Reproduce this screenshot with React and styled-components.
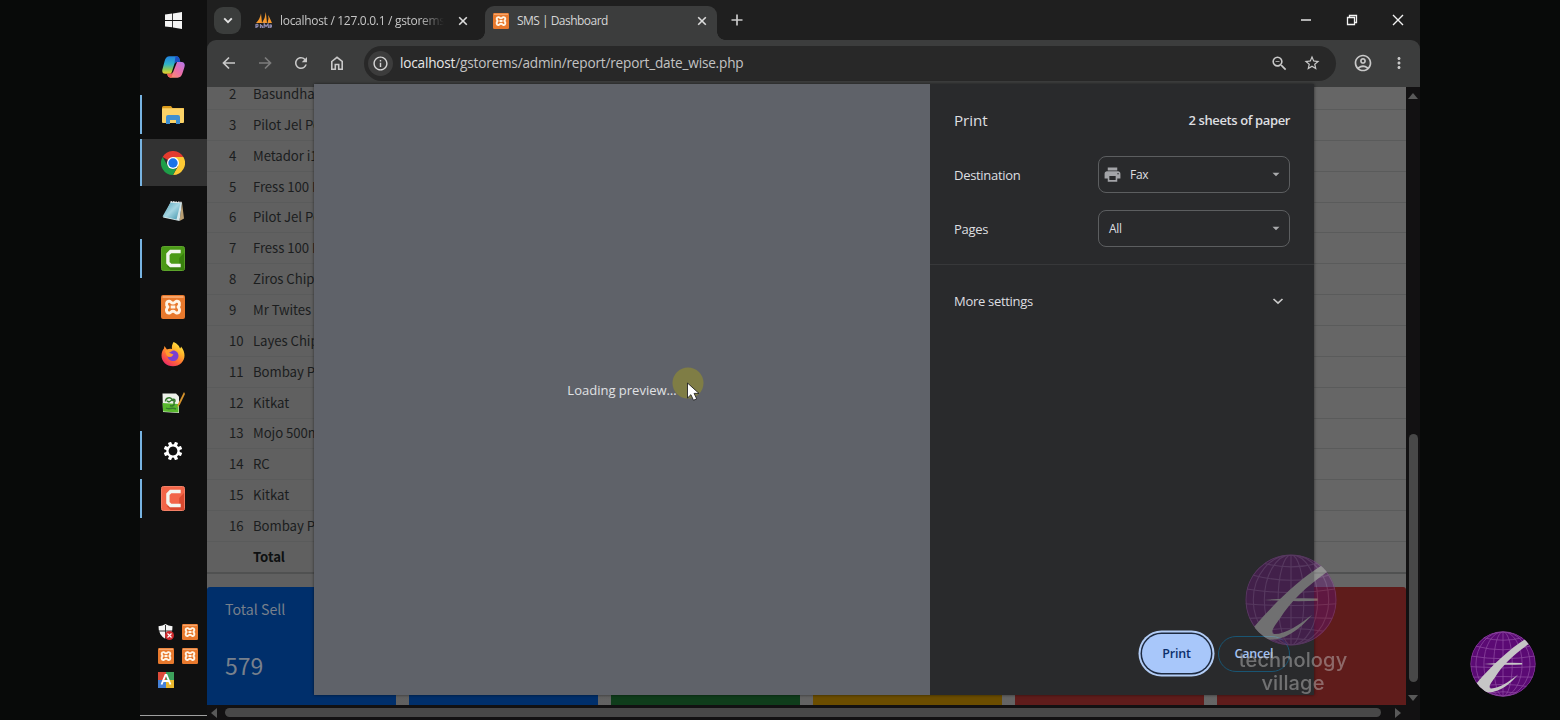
import React from 'react';
import styled, { createGlobalStyle } from 'styled-components';
import { MdRefresh, MdInfoOutline, MdStarOutline, MdOutlineZoomOut, MdOutlineAccountCircle, MdMoreVert, MdPrint } from 'react-icons/md';

const Global = createGlobalStyle`
  * { box-sizing: border-box; }
  body { margin: 0; background: #080a09; overflow: hidden; font-family: "Open Sans", "Noto Sans", sans-serif; }
  svg { display: block; flex: none; }
`;

const Screen = styled.div`
  display: flex; width: 1560px; height: 720px; position: relative; overflow: hidden;
`;
const Gutter = styled.div`width: 140px; background: #080a09;`;

/* ---------- taskbar ---------- */
const Taskbar = styled.nav`
  width: 67px; height: 720px; background: #101010; display: flex; flex-direction: column;
`;
const Slot = styled.div`
  height: ${p => p.$h || 48}px; display: flex; align-items: center; justify-content: center;
  padding-bottom: ${p => (p.$h ? 3 : 1)}px; padding-right: 1px;
  background: ${p => (p.$active ? 'linear-gradient(#323232 0 47px, #101010 47px)' : 'none')};
  &::before {
    content: ""; width: 2px; height: ${p => (p.$active ? 47 : 39)}px; margin-right: auto;
    background: ${p => (p.$on ? '#78b4e2' : 'transparent')};
  }
  & > svg { margin-right: auto; margin-left: -2px; }
`;
const Tray = styled.div`
  margin-top: auto; margin-left: 18px; display: grid; grid-template-columns: 16px 16px; gap: 8px;
`;
const ShowDesktop = styled.div`height: 5px; margin-top: 27px; border-top: 1px solid #a0a0a0;`;

/* ---------- browser ---------- */
const Browser = styled.main`
  width: 1213px; height: 720px; display: flex; flex-direction: column; background: #1f1f1f; position: relative;
`;
const TabStrip = styled.div`
  height: 40px; display: flex; align-items: flex-start; padding: 6px 0 0 7px; background: #1f1f1f; color: #d4d4d4;
`;
const TabSearch = styled.div`
  width: 27px; height: 27px; margin-top: 1px; border-radius: 9px; background: #3b3d3c;
  display: grid; place-items: center;
`;
const Tab = styled.div`
  height: 34px; width: ${p => p.$w}px; display: flex; align-items: center; position: relative;
  padding: 0 ${p => (p.$active ? 10 : 15)}px 5px ${p => (p.$active ? 8 : 13)}px;
  margin-left: ${p => (p.$active ? 2 : 1)}px;
  border-radius: 9px 9px 0 0; background: ${p => (p.$active ? '#3c3d3d' : 'transparent')};
  &::before, &::after {
    content: ""; display: ${p => (p.$active ? 'block' : 'none')};
    position: absolute; bottom: 0; width: 8px; height: 8px;
  }
  &::before { left: -8px; background: radial-gradient(circle at 0 0, transparent 7.5px, #3c3d3d 8px); }
  &::after { right: -8px; background: radial-gradient(circle at 100% 0, transparent 7.5px, #3c3d3d 8px); }
`;
const TabTitle = styled.span`
  flex: 1; margin: 1px ${p => (p.$fade ? 14 : 8)}px 0 8px;
  font-size: 12px; letter-spacing: ${p => p.$ls}px; line-height: 18px;
  white-space: nowrap; overflow: hidden; color: ${p => (p.$fade ? '#c6c6c6' : '#d6d6d6')};
  mask-image: ${p => (p.$fade ? 'linear-gradient(90deg, #000 85%, transparent)' : 'none')};
`;
const NewTab = styled.div`margin: 8px 0 0 14px;`;
const WindowControls = styled.div`
  margin-left: auto; margin-right: 16px; display: flex; align-items: center; height: 27px; gap: 34px;
`;
const Toolbar = styled.div`
  height: 47px; display: flex; align-items: center; background: #3c3d3d; border-radius: 9px 9px 0 0;
  padding: 0 12px 1px 14px; color: #c9c9c9;
`;
const NavButtons = styled.div`display: flex; gap: 20px; width: 143px;`;
const UrlBar = styled.div`
  width: 972px; height: 35px; border-radius: 18px; background: #282828; display: flex; align-items: center;
  padding: 0 15px 0 4px;
`;
const SiteInfo = styled.div`
  width: 25px; height: 25px; border-radius: 50%; background: #3c3c3c; display: grid; place-items: center;
`;
const Url = styled.div`
  margin-left: 7px; font-size: 13.6px; letter-spacing: -0.19px; color: #c3c3c3; flex: 1; padding-bottom: 1px;
  & b { font-weight: 400; color: #e6e6e6; }
`;
const Trailing = styled.div`display: flex; gap: 14px; align-items: center;`;
const Account = styled.div`display: flex; gap: 17px; align-items: center; margin-left: 17px;`;

const Viewport = styled.div`height: 618px; display: flex;`;
const Page = styled.div`
  width: 1199px; height: 618px; overflow: hidden; background: linear-gradient(90deg, #606060 0 107px, #666666 1100px);
  font-family: "Noto Sans CJK SC", "Open Sans", sans-serif; color: #1b1d1e;
`;
const Rows = styled.div`height: 487px; display: flex; flex-direction: column; justify-content: flex-end;`;
const Row = styled.div`
  flex: none; height: ${p => (p.$total ? 32 : 30.87)}px; display: flex; align-items: center;
  border-bottom: ${p => (p.$total ? '2px solid #505151' : '1px solid #5a5b5b')};
  font-size: 13.2px; line-height: 20px; font-weight: ${p => (p.$total ? 700 : 400)};
  padding-left: 22px; color: ${p => (p.$total ? '#0e1011' : 'inherit')};
`;
const Num = styled.span`width: 24px;`;
const Name = styled.span`white-space: nowrap; letter-spacing: -0.05px;`;
const Cards = styled.div`
  margin-top: 13px; height: 118px; display: grid; grid-template-columns: repeat(6, 188.5px); gap: 13.5px;
`;
const Card = styled.div`
  background: ${p => p.$bg}; border-radius: 3px 3px 0 0; color: #78808c; padding: 10px 18px; line-height: 24px;
`;
const CardTitle = styled.div`font-size: 14.2px;`;
const CardValue = styled.div`font-size: 23px; line-height: 32px; margin-top: 28px;`;

const VScroll = styled.div`
  width: 14px; background: #121112; display: flex; flex-direction: column; align-items: center; padding: 5px 0 2px;
`;
const VThumb = styled.div`width: 9px; height: 248px; border-radius: 5px; background: #484848; margin: auto 0 11px;`;
const HScroll = styled.div`
  height: 15px; background: #121112; display: flex; align-items: center; padding: 0 18px 0 3px;
`;
const HThumb = styled.div`flex: none; width: 1156px; height: 9px; border-radius: 5px; background: #484848; margin: 0 12px 0 5px;`;

/* ---------- print dialog ---------- */
const Dialog = styled.section`
  position: absolute; left: 107px; top: 84px; width: 1000px; height: 611px; display: flex;
  box-shadow: 0 0 3px rgba(0,0,0,.55);
`;
const Preview = styled.div`
  width: 616px; background: #5f6269; display: grid; place-items: center; color: #e0e1e4;
  font-size: 13px;
`;
const Settings = styled.div`
  width: 384px; background: #292a2c; color: #dedfe0; display: flex; flex-direction: column;
`;
const Field = styled.div`
  height: ${p => p.$h}px; padding: 0 24px; display: flex; align-items: center; justify-content: space-between;
  font-size: 13px; letter-spacing: -0.3px;
`;
const Heading = styled.span`font-size: 15.2px; letter-spacing: -0.05px;`;
const Sheets = styled.span`font-weight: 600; font-size: 13px; letter-spacing: -0.38px;`;
const Select = styled.div`
  width: 192px; height: 37px; border: 1px solid #5c5e60; border-radius: 8px; display: flex; align-items: center;
  padding: 0 8px 0 ${p => (p.$icon ? 4 : 10)}px; gap: 8px; font-size: 12px; margin-top: -1px;
  & > span { flex: 1; }
`;
const Divider = styled.div`height: 1px; background: #37383a; margin-top: 4px;`;
const Actions = styled.div`
  margin-top: auto; padding: 0 24px 22px; display: flex; justify-content: flex-end; align-items: center; gap: 4px;
`;
const Button = styled.button`
  font: 600 12.5px "Open Sans", sans-serif; letter-spacing: -0.2px; border-radius: 22px; padding: 0 0 1px;
  width: ${p => (p.$primary ? 69 : 72)}px; height: ${p => (p.$primary ? 39 : 36)}px;
  color: ${p => (p.$primary ? '#0c2f6b' : '#a4c2f2')};
  background: ${p => (p.$primary ? '#a8c7fa' : 'transparent')};
  border: ${p => (p.$primary ? '0' : '1px solid #195573')};
  margin: ${p => (p.$primary ? '0 3px' : '0')};
  box-shadow: ${p => (p.$primary ? '0 0 0 1.5px #1d2a40, 0 0 0 3.5px #b3cdf6' : 'none')};
`;

/* ---------- overlays ---------- */
const Watermark = styled.div`
  position: absolute; left: 1223px; top: 554px; width: 140px; display: flex; flex-direction: column; align-items: center;
  font: 500 20px/23px "Inter", sans-serif; letter-spacing: .15px; text-align: center; color: #c8c8c8; opacity: .45;
  & > svg { margin: 0 4px 3px 0; }
`;
const Badge = styled.div`position: absolute; left: 1470px; top: 631px;`;
const Pointer = styled.div`position: absolute; left: 672px; top: 367px;`;

/* ---------- drawings ---------- */
const Xampp = ({ size = 16 }) => (
  <svg width={size} height={size} viewBox="0 0 24 24">
    <rect width="24" height="24" rx="2" fill="#e8792d" />
    <rect x="1.5" y="1" width="21" height="2" fill="#f7a468" />
    <path d="M8.500 6.200C5.400 5.900 4.400 9.400 7 12c-2.800 2.600-1.500 6.500 1.500 6 1.700-.3 1.300-1.800 3.500-1.800s1.800 1.500 3.500 1.800c3 .5 4.300-3.400 1.500-6 2.600-2.600 1.600-6.100-1.500-5.800-1.700.2-1.300 1.900-3.500 1.900S10.200 6.400 8.500 6.200zM9.700 12h4.600" fill="none" stroke="#fff4e4" strokeWidth="2.900" strokeLinejoin="round" />
  </svg>
);
const WindowsLogo = () => (
  <svg width="17" height="17" viewBox="0 0 17 17" fill="#f4f4f4"><path d="M0 2.500 7.200 1.500V8H0zM8 1.400 17 0v8H8zM0 8.900h7.200v6.400L0 14.400zM8 8.900h9V17l-9-1.400z" /></svg>
);
const Copilot = () => (
  <svg width="23" height="22" viewBox="0.700 1.200 22.600 21.300" preserveAspectRatio="none">
    <defs>
      <linearGradient id="cpA" x1="0" y1="0" x2="0" y2="1"><stop offset="0" stopColor="#2283e0" /><stop offset=".45" stopColor="#2fb3c9" /><stop offset=".75" stopColor="#8fca55" /><stop offset="1" stopColor="#f2d02c" /></linearGradient>
      <linearGradient id="cpB" x1="1" y1="0" x2="0" y2="1"><stop offset="0" stopColor="#b277ee" /><stop offset=".5" stopColor="#ee6fa5" /><stop offset="1" stopColor="#ff9b5a" /></linearGradient>
    </defs>
    <path d="M15.500 7H20c3 0 3.500 2.500 2.700 5l-1.900 6c-.8 2.600-2.200 4.200-4.800 4.200H9.200c-2 0-2.800-1.200-3.400-3.700H9c1.600 0 2.300-.8 2.800-2.300z" fill="url(#cpB)" />
    <path d="M8.200 1.500h6.600c2 0 2.700 1.100 3.400 3.700l.5 1.800h-3.200c-1.500 0-2.300.8-2.800 2.400l-2.300 7c-.5 1.400-1.200 2.100-2.700 2.100H4c-3 0-3.600-2.500-2.700-5l2-7.500c.8-2.700 2.200-4.500 4.900-4.500z" fill="url(#cpA)" />
    <path d="M14 1.500h.8c2 0 2.700 1.100 3.400 3.700l.5 1.800h-3.200c-1.300 0-2.100.6-2.600 1.800z" fill="#1c4fc4" />
    <path d="M10 22.200H9.200c-2 0-2.800-1.200-3.400-3.700H9c1.300 0 2.100-.5 2.600-1.700z" fill="#f0605c" />
  </svg>
);
const Explorer = () => (
  <svg width="22" height="20" viewBox="0 0 22 20">
    <path d="M0 2.500Q0 1 1.500 1H9l1.500 2H22v5H0z" fill="#d99a1c" />
    <rect y="3.300" width="22" height="14.700" rx="1" fill="#fbd267" />
    <path d="M4 19v-7q0-2 2-2h10q2 0 2 2v7h-4v-4H8v4z" fill="#3f8fd0" />
  </svg>
);
const Chrome = () => (
  <svg width="24" height="24" viewBox="0 0 24 24">
    <path d="M12 12 1.600 6A12 12 0 0 1 22.400 6z" fill="#e33b2e" />
    <path d="M12 6h10.400A12 12 0 0 1 12 24l5.200-9z" fill="#fcc934" />
    <path d="M1.600 6 6.800 15 12 18l3.500-1L12 24A12 12 0 0 1 1.600 6z" fill="#1e9e48" />
    <circle cx="12" cy="12" r="6" fill="#fff" /><circle cx="12" cy="12" r="4.700" fill="#1a73e8" />
  </svg>
);
const Notepad = () => (
  <svg width="23" height="22" viewBox="0 0 23 22">
    <defs><linearGradient id="np" x1="0" y1="0" x2="1" y2="1"><stop offset="0" stopColor="#4f9db3" /><stop offset=".5" stopColor="#a5d5e2" /><stop offset="1" stopColor="#3e93ab" /></linearGradient></defs>
    <path d="M20 2.500 22 18.500 17.500 21z" fill="#b99f73" />
    <path d="M9 1.500 20 2.500 17.500 21 1 17.500z" fill="#d5e6e9" />
    <path d="M8.500 2.500 18.500 3.200 14.500 19.500.5 16.500z" fill="url(#np)" />
    <path d="M8.500 1.800 19.500 2.300" stroke="#eee" strokeWidth="1.300" strokeDasharray="1.500 1" />
  </svg>
);
const Camtasia = ({ a, b, edge }) => (
  <svg width="24" height="25" viewBox="0 0 25 25" preserveAspectRatio="none">
    <rect x=".5" y=".5" width="24" height="24" rx="2" fill={a} stroke={edge} />
    <path d="M24 7 19 12v12h5z" fill={b} /><path d="M6 20 10 24h14V15L19.500 19z" fill={b} />
    <path d="M20.500 5.500H10L7.200 8.300v8.400L10 19.500h10.500" fill="none" stroke="#f3f6f0" strokeWidth="3.500" />
  </svg>
);
const Firefox = () => (
  <svg width="24" height="25" viewBox="0 0 24 25">
    <defs><linearGradient id="fx" x1=".85" y1="0" x2=".2" y2="1"><stop offset="0" stopColor="#fff04a" /><stop offset=".35" stopColor="#ffb329" /><stop offset=".65" stopColor="#ff6a35" /><stop offset="1" stopColor="#e8206e" /></linearGradient></defs>
    <path d="M12.500 0C17 2 18.500 4.500 19 6.500 19.800 6 20 5 20 4.500 22.500 7.500 23.500 10.500 23.500 13.500 23.500 19.500 18.500 24.300 12 24.300S.5 19.500.5 13.500C.5 10 2 7.500 3 6.500L3.400 4 6 7.500C8 6.500 9.500 6.500 11 7c-.5-2 .2-5 1.500-7z" fill="url(#fx)" />
    <path d="M7.500 10.500c1.500-1.500 3-1.200 4-1.800 3-.7 6 2 6 5.100 0 3-2.400 5.300-5.300 5.300S6.800 17 6.500 14.200c1.200.8 2.500 1 4 .2l1.700-1.900c-1.200 0-2.700.1-4.700-2z" fill="#7b3fd1" />
    <path d="M4 9c2-2 5-1.500 7.500-.3L8 10.700l4.500 1.800-2 2c-2.500 1-4.500-.2-5-1.500z" fill="#ff9a2e" />
  </svg>
);
const NotepadPlus = () => (
  <svg width="24" height="24" viewBox="0 0 24 24">
    <path d="M1.500 2.500H15l3 3V22L2 21z" fill="#eef1ea" />
    <path d="M1.500 12 17.500 13v8.500L2.200 20.500z" fill="#58b82e" />
    <path d="M4.500 10.500c0-3.500 4.500-5 6.500-2 3-1 4 1 2 3 1 3-2 4-4 3M6 10l2 1 3-2 2 1M5 17c3 2 6-1 10 1" fill="none" stroke="#357a2c" strokeWidth="1.500" />
    <path d="M23 1 17 13l-1 3.500 2.800-2.800L24 3z" fill="#d8942c" />
  </svg>
);
const teeth = [0, 45, 90, 135, 180, 225, 270, 315];
const Gear = () => (
  <svg width="20" height="20" viewBox="-10 -10 20 20">
    {teeth.map(r => <rect key={r} x="-1.700" y="-9.300" width="3.400" height="4.500" rx=".6" fill="#fff" transform={`rotate(${r + 22.5})`} />)}
    <circle r="5.600" fill="none" stroke="#fff" strokeWidth="2.300" />
  </svg>
);
const Shield = () => (
  <svg width="16" height="16" viewBox="0 0 16 16">
    <path d="M7.500 0Q10 2 14.500 2.200 15 10.500 7.500 15 .2 10.500.5 2.200 5 2 7.500 0z" fill="#f5f5f5" />
    <path d="M7.500 1v14M.5 7h14" stroke="#333" />
    <circle cx="11.500" cy="11.500" r="4.500" fill="#cf2a2e" /><path d="m9.500 9.500 4 4m0-4-4 4" stroke="#fff" strokeWidth="1.100" />
  </svg>
);
const LetterTile = () => (
  <svg width="16" height="16" viewBox="0 0 16 16">
    <path d="M0 0h8v8H0z" fill="#dd4b3a" /><path d="M8 0h8v8H8z" fill="#3da15b" /><path d="M0 8h8v8H0z" fill="#4581d8" /><path d="M8 8h8v8H8z" fill="#eab82d" />
    <path d="M3.500 12.500 7.500 3h1l4 9.500M5.200 9h5.600" fill="none" stroke="#fff" strokeWidth="1.900" />
  </svg>
);
const Sails = () => (
  <svg width="17" height="17" viewBox="0 0 17 17">
    <path d="M6 1.500 7 11H1Q5 7 6 1.500zM10.800 0 12 11H7Q10.500 5.500 10.800 0zM13.300 3 17 11h-4.500Q14 7 13.300 3z" fill="#f5982c" />
    <path d="M1 16V12.700q2-1 2 .8t-2 1M5.500 16v-4M5.500 13.500q2-.6 2 2.500M9 16l.3-4 1.700 2.500 2-2.500.5 4M15 16v-3q1.500-.5 1.500 1t-1.500.7" fill="none" stroke="#8c89ae" strokeWidth="1.300" />
  </svg>
);
const Stroke = ({ w = 16, d, sw = 1.7, color = '#c9c9c9', h = w }) => (
  <svg width={w} height={h} viewBox={`0 0 ${w} ${h}`} fill="none" stroke={color} strokeWidth={sw}><path d={d} /></svg>
);
const Cross = () => <Stroke w={10} d="M1.200 1.200 8.800 8.800M8.800 1.200 1.200 8.800" sw={1.6} color="#dcdcdc" />;
const Tri = ({ d, c = '#595959', w = 10 }) => <svg width={w} height={w} viewBox="0 0 10 10"><path d={d} fill={c} /></svg>;
const Caret = () => <svg width="10" height="5" viewBox="0 0 10 5"><path d="M1.500 .7h7L5 4.200z" fill="#a9aaac" /></svg>;

const Globe = ({ size, id, fill }) => (
  <svg width={size} height={size} viewBox="0 0 100 100">
    <clipPath id={id}><circle cx="50" cy="50" r="49.500" /></clipPath>
    <g clipPath={`url(#${id})`}>
      <circle cx="50" cy="50" r="50" fill={fill} />
      <g fill="none" stroke="#a568b6" strokeWidth="1.200" opacity=".65">
        <ellipse cx="50" cy="50" rx="14" ry="49" /><ellipse cx="50" cy="50" rx="29" ry="49" /><ellipse cx="50" cy="50" rx="41" ry="49" />
        <circle cx="50" cy="50" r="49" />
        <path d="M50 0v100M20 10Q50 18 80 10M9 23Q50 34 91 23M2 38Q50 46 98 38M0 54Q50 58 100 54M4 70Q50 68 96 70M14 84Q50 78 86 84M28 94Q50 90 72 94" />
      </g>
      <path d="M84 12C60 27 33 52 10 79Q12 89 24 93C44 95 61 80 73 66 58 78 42 88 31 87 27 84 33 77 38 70 50 51 66 36 90 19z" fill="#c6c6c6" />
      <path d="M21 50Q50 47.500 79 48.500v2.400Q50 52 21 50z" fill="#c6c6c6" />
    </g>
  </svg>
);

const items = [
  ['2', 'Basundhara'], ['3', 'Pilot Jel Pen'], ['4', 'Metador i10'], ['5', 'Fress 100 P'], ['6', 'Pilot Jel Pen'],
  ['7', 'Fress 100 P'], ['8', 'Ziros Chips'], ['9', 'Mr Twites'], ['10', 'Layes Chips'], ['11', 'Bombay P'],
  ['12', 'Kitkat'], ['13', 'Mojo 500m'], ['14', 'RC'], ['15', 'Kitkat'], ['16', 'Bombay P'],
];
const cardColors = ['#002f6b', '#002f6b', '#0f3d1b', '#6b4d00', '#5f1c1b', '#5f1c1b'];

export default function App() {
  return (
    <Screen>
      <Global />
      <Gutter />
      <Taskbar>
        <Slot $h={43}><WindowsLogo /></Slot>
        <Slot><Copilot /></Slot>
        <Slot $on><Explorer /></Slot>
        <Slot $on $active><Chrome /></Slot>
        <Slot><Notepad /></Slot>
        <Slot $on><Camtasia a="#4b9a17" b="#38810d" edge="#5da52c" /></Slot>
        <Slot><Xampp size={24} /></Slot>
        <Slot><Firefox /></Slot>
        <Slot><NotepadPlus /></Slot>
        <Slot $on><Gear /></Slot>
        <Slot $on><Camtasia a="#f26548" b="#d9492f" edge="#f58268" /></Slot>
        <Tray><Shield /><Xampp /><Xampp /><Xampp /><LetterTile /></Tray>
        <ShowDesktop />
      </Taskbar>
      <Browser>
        <TabStrip>
          <TabSearch><Stroke w={10} h={7} d="M1.200 1.300 5 5.100 8.800 1.300" sw={1.9} color="#e2e2e2" /></TabSearch>
          <Tab $w={241}><Sails /><TabTitle $fade $ls={-0.3}>localhost / 127.0.0.1 / gstorems</TabTitle><Cross /></Tab>
          <Tab $active $w={232}><Xampp /><TabTitle $ls={-0.52}>SMS | Dashboard</TabTitle><Cross /></Tab>
          <NewTab><Stroke w={12} d="M6 .5v11M.5 6h11" /></NewTab>
          <WindowControls>
            <Stroke w={12} d="M1 6h10" sw={1.4} color="#f2f2f2" />
            <Stroke w={12} d="M1.500 3.500h7v7h-7zM3.500 3.500v-2h7v7h-2" sw={1.3} color="#f2f2f2" />
            <Stroke w={12} d="M1 1 11 11M11 1 1 11" sw={1.4} color="#f2f2f2" />
          </WindowControls>
        </TabStrip>
        <Toolbar>
          <NavButtons>
            <Stroke d="M14 8H2.800M8 2.500 2.500 8 8 13.500" />
            <Stroke d="M2 8h11.200M8 2.500 13.500 8 8 13.500" color="#7c7c7c" />
            <MdRefresh size={18} style={{ margin: '-1px -1px' }} />
            <Stroke d="M2.800 6.500 8 2.300l5.200 4.200v7.700H9.700V9.500H6.300v4.700H2.800z" sw={1.6} />
          </NavButtons>
          <UrlBar>
            <SiteInfo><MdInfoOutline size={17} color="#d6d6d6" /></SiteInfo>
            <Url><b>localhost</b>/gstorems/admin/report/report_date_wise.php</Url>
            <Trailing><MdOutlineZoomOut size={19} /><MdStarOutline size={18} /></Trailing>
          </UrlBar>
          <Account><MdOutlineAccountCircle size={20} /><MdMoreVert size={18} /></Account>
        </Toolbar>
        <Viewport>
          <Page>
            <Rows>
              {items.map(([n, name]) => <Row key={n}><Num>{n}</Num><Name>{name}</Name></Row>)}
              <Row $total><Num /><Name>Total</Name></Row>
            </Rows>
            <Cards>
              {cardColors.map((c, i) => (
                <Card key={i} $bg={c}>{i === 0 && <><CardTitle>Total Sell</CardTitle><CardValue>579</CardValue></>}</Card>
              ))}
            </Cards>
          </Page>
          <VScroll>
            <Tri d="M5 1 10 7H0z" /><VThumb /><Tri d="M5 8 0 2h10z" />
          </VScroll>
        </Viewport>
        <HScroll><Tri d="M1 5 7 0v10z" /><HThumb /><Tri d="M8 5 2 0v10z" /></HScroll>
        <Dialog>
          <Preview>Loading preview…</Preview>
          <Settings>
            <Field $h={64} style={{ marginTop: 4 }}><Heading>Print</Heading><Sheets>2 sheets of paper</Sheets></Field>
            <Field $h={46}><span>Destination</span><Select $icon><MdPrint size={19} color="#a3a4a8" /><span>Fax</span><Caret /></Select></Field>
            <Field $h={62}><span>Pages</span><Select><span>All</span><Caret /></Select></Field>
            <Divider />
            <Field $h={72}><span>More settings</span><Stroke w={24} h={8} d="M7.500 2 12 6.200 16.500 2" /></Field>
            <Actions><Button $primary>Print</Button><Button>Cancel</Button></Actions>
          </Settings>
        </Dialog>
      </Browser>
      <Gutter />
      <Pointer>
        <svg width="34" height="36" viewBox="0 0 34 36">
          <circle cx="16" cy="16" r="15.500" fill="#7f7d45" />
          <path d="M15.500 16v15l3.400-3.300 2.600 5.600 3.200-1.500-2.600-5.400h4.900z" fill="#fff" stroke="#222" strokeWidth=".9" />
        </svg>
      </Pointer>
      <Watermark><Globe size={92} id="globeLarge" fill="#61146f" /><span>technology<br />village</span></Watermark>
      <Badge><Globe size={66} id="globeSmall" fill="#5b0a74" /></Badge>
    </Screen>
  );
}
